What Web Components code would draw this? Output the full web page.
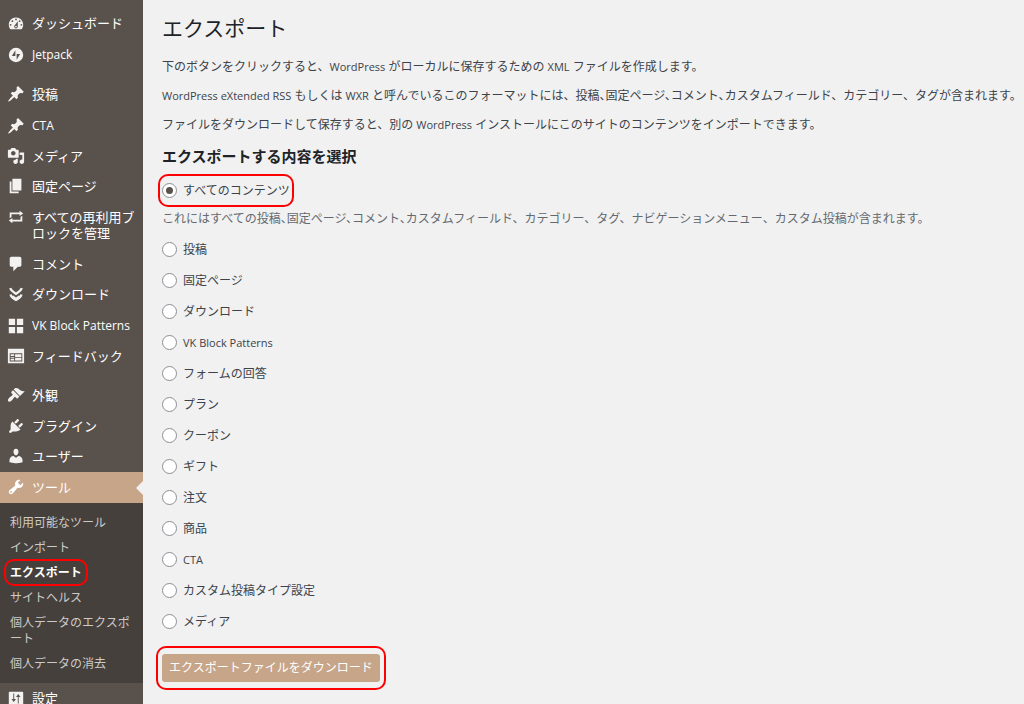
<!DOCTYPE html>
<html lang="ja">
<head>
<meta charset="utf-8">
<meta name="viewport" content="width=device-width, initial-scale=1">
<title>エクスポート</title>
<style>
  body {
    margin: 0;
    background: #f1f1f1;
    color: #3c434a;
    font: 12px/18px "Open Sans", "Noto Sans CJK JP", sans-serif;
    overflow: hidden;
  }
</style>
</head>
<body>
<admin-layout>
  <admin-menu slot="menu">
    <menu-item icon="dashboard">ダッシュボード</menu-item>
    <menu-item icon="jetpack" latin>Jetpack</menu-item>
    <menu-separator></menu-separator>
    <menu-item icon="post">投稿</menu-item>
    <menu-item icon="post" latin>CTA</menu-item>
    <menu-item icon="media">メディア</menu-item>
    <menu-item icon="page">固定ページ</menu-item>
    <menu-item icon="repeat">すべての再利用ブロックを管理</menu-item>
    <menu-item icon="comment">コメント</menu-item>
    <menu-item icon="download">ダウンロード</menu-item>
    <menu-item icon="grid" latin>VK Block Patterns</menu-item>
    <menu-item icon="feedback">フィードバック</menu-item>
    <menu-separator></menu-separator>
    <menu-item icon="appearance">外観</menu-item>
    <menu-item icon="plugins">プラグイン</menu-item>
    <menu-item icon="users">ユーザー</menu-item>
    <menu-item icon="tools" current>ツール</menu-item>
    <sub-menu>
      <sub-item>利用可能なツール</sub-item>
      <sub-item>インポート</sub-item>
      <sub-item current>エクスポート</sub-item>
      <sub-item>サイトヘルス</sub-item>
      <sub-item>個人データのエクスポート</sub-item>
      <sub-item>個人データの消去</sub-item>
    </sub-menu>
    <menu-item icon="settings">設定</menu-item>
  </admin-menu>
  <export-page></export-page>
</admin-layout>

<script>
const icons = {
  dashboard: '<path fill-rule="evenodd" d="M3.76 17h12.48c1.1-1.37 1.76-3.11 1.76-5 0-4.42-3.58-8-8-8s-8 3.58-8 8c0 1.89.66 3.63 1.76 5zM10 5c.55 0 1 .45 1 1s-.45 1-1 1-1-.45-1-1 .45-1 1-1zM6 7c.55 0 1 .45 1 1s-.45 1-1 1-1-.45-1-1 .45-1 1-1zm8 0c.55 0 1 .45 1 1s-.45 1-1 1-1-.45-1-1 .45-1 1-1zm-5.37 5.55L12 8v6c0 1.1-.9 2-2 2s-2-.9-2-2c0-.57.24-1.08.63-1.45zM4 11c.55 0 1 .45 1 1s-.45 1-1 1-1-.45-1-1 .45-1 1-1zm12 0c.55 0 1 .45 1 1s-.45 1-1 1-1-.45-1-1 .45-1 1-1zm-5 3c0-.55-.45-1-1-1s-1 .45-1 1 .45 1 1 1 1-.45 1-1z"/>',
  jetpack: '<path fill-rule="evenodd" d="M10 2a8 8 0 1 0 0 16 8 8 0 0 0 0-16zM9.3 4.6v6.600H5.4zM10.7 15.4V8.800h3.9z"/>',
  post: '<path d="M10.44 3.02l1.82-1.82 6.36 6.35-1.83 1.82c-1.05-.68-2.48-.57-3.41.36l-.75.75c-.92.93-1.04 2.35-.35 3.41l-1.83 1.82-2.41-2.41-2.8 2.79c-.42.42-3.38 2.71-3.8 2.29s1.86-3.39 2.28-3.81l2.79-2.79L4.1 9.36l1.83-1.82c1.05.69 2.48.57 3.4-.36l.75-.75c.93-.92 1.05-2.35.36-3.41z"/>',
  media: '<path fill-rule="evenodd" d="M13 11V4c0-.55-.45-1-1-1h-1.67L9 1H5L3.67 3H2c-.55 0-1 .45-1 1v7c0 .55.45 1 1 1h10c.55 0 1-.45 1-1zM7 4.5c1.38 0 2.5 1.12 2.5 2.5S8.38 9.5 7 9.5 4.5 8.38 4.5 7 5.62 4.5 7 4.5zM14 6h5v10.5c0 1.38-1.12 2.5-2.5 2.5S14 17.88 14 16.5s1.12-2.5 2.5-2.5c.17 0 .34.02.5.05V9h-3V6zm-4 8.05V13h2v3.5c0 1.38-1.12 2.5-2.5 2.5S7 17.88 7 16.5 8.12 14 9.5 14c.17 0 .34.02.5.05z"/>',
  page: '<path d="M6 15V2h10v13H6zm-1 1h8v2H3V5h2v11z"/>',
  repeat: '<path d="M5 7v3l-2 1.5V5h11V3l4 3.01L14 9V7H5zm10 6v-3l2-1.5V15H6v2l-4-3.01L6 11v2h9z"/>',
  comment: '<path d="M5 2h9c1.1 0 2 .9 2 2v7c0 1.1-.9 2-2 2h-2l-5 5v-5H5c-1.1 0-2-.9-2-2V4c0-1.1.9-2 2-2z"/>',
  download: '<path fill="none" stroke="currentColor" stroke-width="2.6" d="M3.5 3.5c1 3 3.5 4.2 6.5 6.2 3-2 5.5-3.2 6.5-6.2M4 10.500c.5 3 3 4.500 6 6 3-1.500 5.500-3 6-6"/><path d="M6.500 11.500L10 14l3.500-2.500v2L10 16l-3.500-2.500z"/>',
  grid: '<path d="M2 2h7v7H2zM11 2h7v7h-7zM2 11h7v7H2zM11 11h7v7h-7z"/>',
  feedback: '<path fill-rule="evenodd" d="M1 2h18v16H1zM3 7v9h14V7zM4 8h4v2H4zM9 8h7v3H9zM4 11h4v1H4zM4 13h4v2H4zM9 12h7v3H9z"/>',
  appearance: '<path d="M14.48 11.06L7.41 3.99l1.5-1.5c.5-.56 2.3-.47 3.51.32 1.21.8 1.43 1.28 2.91 2.1 1.18.64 2.45 1.26 4.45.85zm-.71.71L6.7 4.7 4.93 6.47c-.39.39-.39 1.02 0 1.41l1.06 1.06c.39.39.39 1.03 0 1.42-.6.6-1.43 1.11-2.21 1.69-.35.26-.7.53-1.01.84C1.43 14.23.4 16.08 1.4 17.07c.99 1 2.84-.03 4.18-1.36.31-.31.58-.66.85-1.02.57-.78 1.08-1.61 1.69-2.21.39-.39 1.02-.39 1.41 0l1.06 1.06c.39.39 1.02.39 1.41 0z"/>',
  plugins: '<path d="M13.11 4.36L9.87 7.6 8 5.73l3.24-3.24c.35-.34 1.05-.2 1.56.32.52.51.66 1.21.31 1.55zm-8 1.77l.91-1.12 9.01 9.01-1.19.84c-.71.71-2.63 1.16-3.82 1.16H6.14L4.9 17.26c-.59.59-1.54.59-2.12 0-.59-.58-.59-1.53 0-2.12l1.24-1.24v-3.88c0-1.13.4-3.19 1.09-3.89zm7.26 3.97l3.24-3.24c.34-.35 1.04-.21 1.55.31.52.51.66 1.21.31 1.55l-3.24 3.25z"/>',
  users: '<path d="M10 9.25c-2.27 0-2.73-3.44-2.73-3.44C7 4.02 7.82 2 9.97 2c2.16 0 2.98 2.02 2.71 3.81 0 0-.41 3.44-2.68 3.44zm0 2.57L12.72 10c2.39 0 4.52 2.33 4.52 4.53v2.49s-3.65 1.13-7.24 1.13c-3.65 0-7.24-1.13-7.24-1.13v-2.49c0-2.25 1.94-4.48 4.47-4.48z"/>',
  tools: '<path fill-rule="evenodd" d="M16.68 9.77c-1.34 1.34-3.3 1.67-4.95.99l-5.41 6.52c-.99.99-2.59.99-3.58 0s-.99-2.59 0-3.57l6.52-5.42c-.68-1.65-.35-3.61.99-4.95 1.28-1.28 3.12-1.62 4.72-1.06l-2.89 2.89 2.82 2.82 2.86-2.87c.53 1.58.18 3.39-1.08 4.65zM3.81 16.21c.4.39 1.04.39 1.43 0 .4-.4.4-1.04 0-1.43-.39-.4-1.03-.4-1.43 0-.39.39-.39 1.03 0 1.43z"/>',
  settings: '<path fill-rule="evenodd" d="M18 17V4c0-.55-.45-1-1-1H3c-.55 0-1 .45-1 1v13c0 .55.45 1 1 1h14c.55 0 1-.45 1-1zM8 11h2l-2.5 3.5L5 11h2V5h1zM13 9v7h-1V9h-2l2.5-3.5L15 9z"/>'
};

class AdminLayout extends HTMLElement {
  connectedCallback() {
    this.attachShadow({ mode: "open" });
    this.shadowRoot.innerHTML = `
      <style>
        :host {
          display: grid;
          grid-template-columns: 143px minmax(0, 1fr);
          min-height: 100vh;
        }
        main { padding: 16px 0 12px 19px; }
      </style>
      <slot name="menu"></slot>
      <main><slot></slot></main>
    `;
  }
}

class AdminMenu extends HTMLElement {
  connectedCallback() {
    this.attachShadow({ mode: "open" });
    this.shadowRoot.innerHTML = `
      <style>
        :host {
          display: block;
          background: #59524c;
          color: #fff;
        }
        nav {
          display: flex;
          flex-direction: column;
          padding-top: 8px;
        }
        ::slotted(menu-item:nth-child(3n)) { --pad-bottom: 7px; }
      </style>
      <nav><slot></slot></nav>
    `;
  }
}

class MenuSeparator extends HTMLElement {
  connectedCallback() {
    this.attachShadow({ mode: "open" });
    this.shadowRoot.innerHTML = `<style>:host { display: block; height: 9px; }</style>`;
  }
}

class MenuItem extends HTMLElement {
  connectedCallback() {
    this.attachShadow({ mode: "open" });
    this.shadowRoot.innerHTML = `
      <style>
        :host { display: block; }
        a {
          position: relative;
          display: grid;
          grid-template-columns: 32px 1fr;
          padding: 7px 7px var(--pad-bottom, 8px) 0;
          color: inherit;
          font-size: 13px;
          line-height: 16px;
          text-decoration: none;
        }
        :host([latin]) a {
          padding-top: 8px;
          padding-bottom: 7px;
          font-size: 12px;
        }
        svg {
          width: 18px;
          height: 18px;
          margin: -1px 7px;
          color: #f3f2f1;
          fill: currentColor;
        }
        :host([current]) a { background: #c7a589; }
        :host([current]) svg { color: #fff; }
        /* notch that points from the open section to the page */
        :host([current]) a::after {
          content: "";
          position: absolute;
          right: 0;
          top: calc(50% - 7px);
          border: 7px solid transparent;
          border-left: 0;
          border-right-color: #f1f1f1;
        }
      </style>
      <a href="#">
        <svg viewBox="0 0 20 20" aria-hidden="true">${icons[this.getAttribute("icon")]}</svg>
        <span><slot></slot></span>
      </a>
    `;
  }
}

class SubMenu extends HTMLElement {
  connectedCallback() {
    this.attachShadow({ mode: "open" });
    this.shadowRoot.innerHTML = `
      <style>
        :host {
          display: block;
          padding: 7px 0;
          background: #46403c;
        }
      </style>
      <slot></slot>
    `;
  }
}

class SubItem extends HTMLElement {
  connectedCallback() {
    this.attachShadow({ mode: "open" });
    this.shadowRoot.innerHTML = `
      <style>
        :host { display: block; }
        a {
          display: block;
          padding: 5px 10px 4px;
          color: #cdcbc9;
          line-height: 16px;
          text-decoration: none;
        }
        span { position: relative; }
        :host([current]) a {
          color: #fff;
          font-weight: 700;
        }
        :host([current]) span::after {
          content: "";
          position: absolute;
          inset: -5px -6px;
          border: 2px solid #f00;
          border-radius: 10px;
        }
      </style>
      <a href="#"><span><slot></slot></span></a>
    `;
  }
}

class RadioOption extends HTMLElement {
  connectedCallback() {
    this.attachShadow({ mode: "open" });
    this.shadowRoot.innerHTML = `
      <style>
        :host { display: flex; }
        :host([latin]) { font-size: 11px; }
        label {
          position: relative;
          display: flex;
          align-items: center;
          gap: 6px;
          height: 19px;
        }
        input {
          appearance: none;
          display: grid;
          place-items: center;
          box-sizing: border-box;
          width: 15px;
          height: 15px;
          margin: 0;
          border: 1px solid #8c8f94;
          border-radius: 50%;
          background: #fff;
        }
        input:checked::before {
          content: "";
          width: 7px;
          height: 7px;
          border-radius: 50%;
          background: #59524c;
        }
        :host([marked]) label::after {
          content: "";
          position: absolute;
          inset: -7px -4px;
          border: 2px solid #f00;
          border-radius: 10px;
          pointer-events: none;
        }
      </style>
      <label><input type="radio" name="content"><slot></slot></label>
    `;
    const input = this.shadowRoot.querySelector("input");
    input.checked = this.hasAttribute("checked");
    input.addEventListener("change", () => {
      // radios in separate shadow roots do not form a group by themselves
      this.parentNode.querySelectorAll("radio-option").forEach((option) => {
        if (option !== this) {
          option.shadowRoot.querySelector("input").checked = false;
        }
      });
    });
  }
}

class ExportPage extends HTMLElement {
  connectedCallback() {
    const types = ["投稿", "固定ページ", "ダウンロード", "VK Block Patterns", "フォームの回答", "プラン", "クーポン",
      "ギフト", "注文", "商品", "CTA", "カスタム投稿タイプ設定", "メディア"];
    const options = types.map((type) => {
      const latin = /^[\w ]+$/.test(type) ? " latin" : "";
      return `<radio-option${latin}>${type}</radio-option>`;
    });
    this.attachShadow({ mode: "open" });
    this.shadowRoot.innerHTML = `
      <style>
        :host { display: block; }
        h1 {
          margin: 0 0 18px;
          color: #1d2327;
          font-size: 21px;
          font-weight: 400;
          line-height: 24px;
        }
        p {
          margin: 0 0 11px;
          white-space: nowrap;
        }
        /* Latin words look a size larger than the kana beside them */
        span { font-size: 11px; line-height: 1; }
        /* half-width commas between the short names */
        b {
          font-weight: inherit;
          font-feature-settings: "halt";
        }
        h2 {
          margin: 0 0 14px;
          color: #1d2327;
          font-size: 15px;
          line-height: 22px;
        }
        form {
          display: flex;
          flex-direction: column;
          align-items: flex-start;
          gap: 12px;
        }
        form p {
          margin: -2px 0 0;
          color: #646970;
        }
        .submit {
          position: relative;
          margin-top: 11px;
        }
        .submit::after {
          content: "";
          position: absolute;
          inset: -8px -6px;
          border: 2px solid #f00;
          border-radius: 10px;
          pointer-events: none;
        }
        button {
          display: block;
          height: 28px;
          padding: 0 7px;
          border: 0;
          border-radius: 3px;
          background: #c7a589;
          color: #fff;
          font: inherit;
        }
      </style>
      <h1>エクスポート</h1>
      <p>下のボタンをクリックすると、<span>WordPress</span> がローカルに保存するための <span>XML</span> ファイルを作成します。</p>
      <p><span>WordPress eXtended RSS</span> もしくは <span>WXR</span> と呼んでいるこのフォーマットには、<b>投稿、固定ページ、コメント、</b>カスタムフィールド、カテゴリー、タグが含まれます。</p>
      <p>ファイルをダウンロードして保存すると、別の <span>WordPress</span> インストールにこのサイトのコンテンツをインポートできます。</p>
      <h2>エクスポートする内容を選択</h2>
      <form>
        <radio-option checked marked>すべてのコンテンツ</radio-option>
        <p>これにはすべての<b>投稿、固定ページ、コメント、</b>カスタムフィールド、カテゴリー、タグ、ナビゲーションメニュー、カスタム投稿が含まれます。</p>
        ${options.join("")}
        <div class="submit"><button type="button">エクスポートファイルをダウンロード</button></div>
      </form>
    `;
  }
}

customElements.define("admin-layout", AdminLayout);
customElements.define("admin-menu", AdminMenu);
customElements.define("menu-separator", MenuSeparator);
customElements.define("menu-item", MenuItem);
customElements.define("sub-menu", SubMenu);
customElements.define("sub-item", SubItem);
customElements.define("radio-option", RadioOption);
customElements.define("export-page", ExportPage);
</script>
</body>
</html>
